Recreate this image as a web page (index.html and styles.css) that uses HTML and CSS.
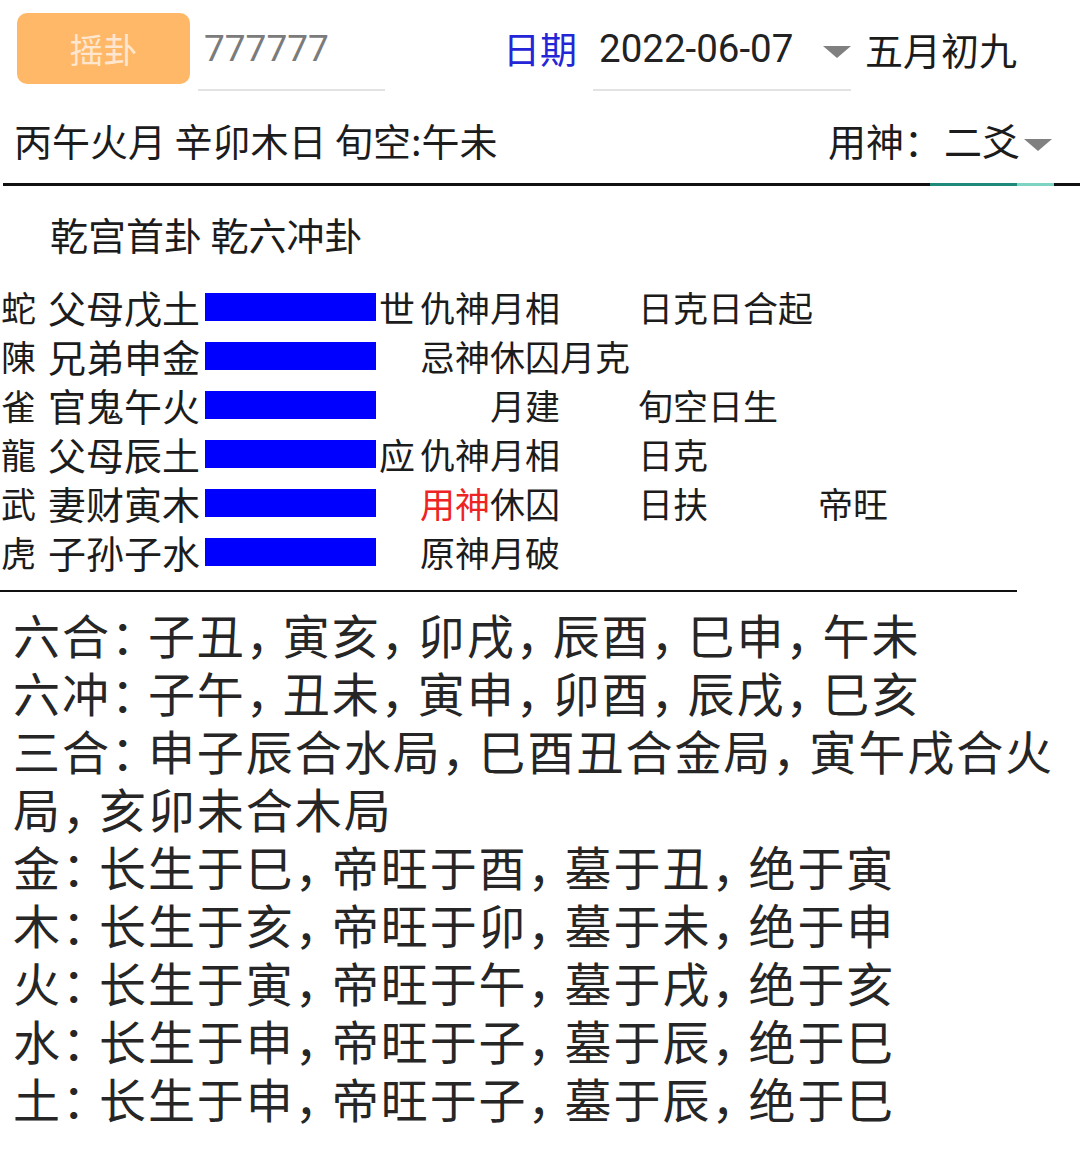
FILE: index.html
```html
<!DOCTYPE html>
<html lang="zh-CN">
<head>
<meta charset="utf-8">
<title>摇卦</title>
<link rel="stylesheet" href="styles.css">
</head>
<body>
<div class="top">
  <div class="btn">摇卦</div>
  <div class="input">777777</div>
  <span class="label">日期</span>
  <div class="date"><span class="date-text">2022-06-07</span><span class="tri"></span></div>
  <span class="lunar">五月初九</span>
</div>
<div class="info">
  <span class="ganzhi">丙午火月 辛卯木日 旬空:午未</span>
  <span class="ys-label">用神：</span>
  <span class="spinner"><span class="ys-value">二爻</span><span class="tri"></span></span>
</div>
<div class="rule"><div class="rule-accent"></div></div>
<div class="gua">
  <div class="gua-title">乾宫首卦 乾六冲卦</div>
  <div class="row"><span class="animal">蛇</span><span class="name">父母戊土</span><span class="bar"></span><span class="mark">世</span><span class="c2">仇神月相</span><span class="c3">日克日合起</span><span class="c4"></span></div>
  <div class="row"><span class="animal">陳</span><span class="name">兄弟申金</span><span class="bar"></span><span class="mark"></span><span class="c2">忌神休囚月克</span><span class="c3"></span><span class="c4"></span></div>
  <div class="row"><span class="animal">雀</span><span class="name">官鬼午火</span><span class="bar"></span><span class="mark"></span><span class="c2">　　月建</span><span class="c3">旬空日生</span><span class="c4"></span></div>
  <div class="row"><span class="animal">龍</span><span class="name">父母辰土</span><span class="bar"></span><span class="mark">应</span><span class="c2">仇神月相</span><span class="c3">日克</span><span class="c4"></span></div>
  <div class="row"><span class="animal">武</span><span class="name">妻财寅木</span><span class="bar"></span><span class="mark"></span><span class="c2"><span class="red">用神</span>休囚</span><span class="c3">日扶</span><span class="c4">帝旺</span></div>
  <div class="row"><span class="animal">虎</span><span class="name">子孙子水</span><span class="bar"></span><span class="mark"></span><span class="c2">原神月破</span><span class="c3"></span><span class="c4"></span></div>
</div>
<div class="rule2"></div>
<div class="notes">
  <p>六合<span class="p">：</span>子丑<span class="p">，</span>寅亥<span class="p">，</span>卯戌<span class="p">，</span>辰酉<span class="p">，</span>巳申<span class="p">，</span>午未</p>
  <p>六冲<span class="p">：</span>子午<span class="p">，</span>丑未<span class="p">，</span>寅申<span class="p">，</span>卯酉<span class="p">，</span>辰戌<span class="p">，</span>巳亥</p>
  <p>三合<span class="p">：</span>申子辰合水局<span class="p">，</span>巳酉丑合金局<span class="p">，</span>寅午戌合火局<span class="p">，</span>亥卯未合木局</p>
  <p>金<span class="p">：</span>长生于巳<span class="p">，</span>帝旺于酉<span class="p">，</span>墓于丑<span class="p">，</span>绝于寅</p>
  <p>木<span class="p">：</span>长生于亥<span class="p">，</span>帝旺于卯<span class="p">，</span>墓于未<span class="p">，</span>绝于申</p>
  <p>火<span class="p">：</span>长生于寅<span class="p">，</span>帝旺于午<span class="p">，</span>墓于戌<span class="p">，</span>绝于亥</p>
  <p>水<span class="p">：</span>长生于申<span class="p">，</span>帝旺于子<span class="p">，</span>墓于辰<span class="p">，</span>绝于巳</p>
  <p>土<span class="p">：</span>长生于申<span class="p">，</span>帝旺于子<span class="p">，</span>墓于辰<span class="p">，</span>绝于巳</p>
</div>
</body>
</html>
```
FILE: styles.css
```css
html, body {
  margin: 0;
  padding: 0;
  background: #ffffff;
}
body {
  width: 1080px;
  height: 1156px;
  overflow: hidden;
  font-family: "Noto Sans CJK SC", "Noto Sans", sans-serif;
  color: #1c1c1c;
}

/* top bar */
.top {
  display: flex;
  align-items: flex-start;
  padding-top: 13px;
  height: 87px;
  box-sizing: border-box;
}
.btn {
  margin-left: 17px;
  width: 173px;
  height: 71px;
  border-radius: 10px;
  background: #ffb868;
  color: #ffe7cf;
  font-size: 34px;
  line-height: 71px;
  text-align: center;
}
.input {
  margin-left: 8px;
  width: 187px;
  height: 78px;
  box-sizing: border-box;
  padding-left: 6px;
  border-bottom: 2px solid #e3e3e3;
  font-family: Roboto, "Noto Sans", sans-serif;
  font-size: 37px;
  line-height: 71px;
  color: #7b7b7b;
}
.label {
  margin-left: 118px;
  font-size: 37px;
  line-height: 71px;
  color: #2525d8;
}
.date {
  margin-left: 16px;
  width: 258px;
  height: 78px;
  box-sizing: border-box;
  border-bottom: 2px solid #e3e3e3;
  display: flex;
  align-items: flex-start;
}
.date-text {
  padding-left: 6px;
  width: 222px;
  font-family: Roboto, "Noto Sans", sans-serif;
  font-size: 38.5px;
  line-height: 71px;
  color: #222222;
}
.tri {
  display: inline-block;
  width: 0;
  height: 0;
  border-left: 14px solid transparent;
  border-right: 14px solid transparent;
  border-top: 12px solid #808080;
}
.date .tri {
  margin-top: 33px;
  margin-left: 4px;
}
.lunar {
  margin-left: 14px;
  font-size: 38px;
  line-height: 71px;
  color: #1c1c1c;
}

/* info row */
.info {
  display: flex;
  align-items: center;
  height: 96px;
  padding-top: 8px;
  box-sizing: border-box;
  padding-left: 14px;
  font-size: 38px;
}
.ganzhi {
  flex: 1;
}
.ys-label {
  width: 116px;
}
.spinner {
  display: flex;
  align-items: center;
  width: 136px;
}
.ys-value {
  width: 80px;
}
.spinner .tri {
  margin-top: 12px;
}

.rule {
  position: relative;
  height: 3px;
  margin-left: 3px;
  background: #111111;
}
.rule-accent {
  position: absolute;
  left: 927px;
  top: 0;
  width: 124px;
  height: 3px;
  background: linear-gradient(to right, #1f8a7c 0, #1f8a7c 70%, #7fd3c3 70%, #7fd3c3 100%);
}

/* gua */
.gua-title {
  height: 96px;
  line-height: 96px;
  padding-left: 50px;
  font-size: 38px;
}
.row {
  display: flex;
  align-items: center;
  height: 49px;
  font-size: 35px;
  white-space: nowrap;
}
.animal {
  width: 48px;
  padding-left: 1px;
  box-sizing: border-box;
  font-size: 35px;
}
.name {
  width: 157px;
  font-size: 38px;
}
.bar {
  width: 171px;
  height: 28px;
  background: #0000ff;
}
.mark {
  width: 44px;
  padding-left: 3px;
  box-sizing: border-box;
  font-size: 36px;
}
.c2 {
  width: 218px;
}
.c3 {
  width: 180px;
}
.red {
  color: #ee2424;
}

.rule2 {
  margin-top: 14px;
  width: 1017px;
  height: 2px;
  background: #111111;
}

/* notes */
.notes {
  padding: 13px 0 0 13px;
  font-size: 47px;
  line-height: 58px;
  letter-spacing: 1.95px;
  color: #262626;
}
.notes p {
  margin: 0;
}
.notes .p {
  letter-spacing: -10px;
}
```
